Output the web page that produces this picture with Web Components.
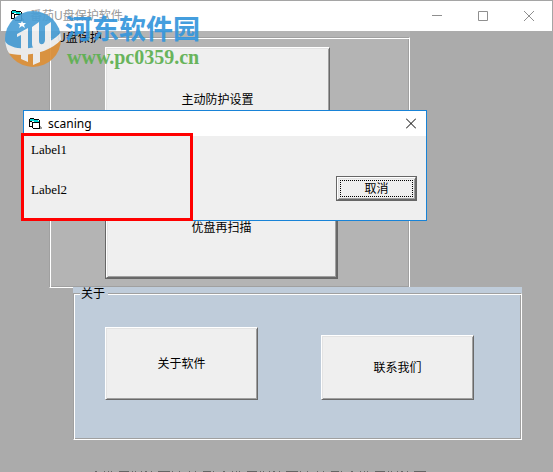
<!DOCTYPE html>
<html lang="zh-CN">
<head>
<meta charset="utf-8">
<title>番茄U盘保护软件</title>
<style>
  body {
    margin: 0;
    position: relative;
    min-height: 100vh;
    overflow: hidden;
    font: 12px/15px "Liberation Sans", "Noto Sans CJK SC", sans-serif;
    color: #000;
  }
  .usb {
    margin: 0 143px 0 49px;
    --frame-bg: #b4b4b4;
    --frame-padding: 3px 71px 8px 55px;
  }
  .about {
    margin: -1px 31px 0 73px;
    --frame-bg: #bfccda;
    --frame-padding: 27px 47px 39px 31px;
  }
  .stack {
    display: grid;
    gap: 24px;
  }
  .stack vb-button { height: 104px; }
  .stack .narrow { margin-right: 8px; }
  .pair {
    display: flex;
    justify-content: space-between;
    align-items: flex-end;
  }
  .pair vb-button { width: 153px; height: 73px; }
  .pair .short { height: 65px; }
  scan-dialog {
    position: absolute;
    left: 23px;
    top: 110px;
  }
  site-mark {
    position: absolute;
    left: 4px;
    top: 11px;
  }
</style>
</head>
<body>
  <app-window>
    <span slot="title">番茄U盘保护软件</span>
    <group-frame class="usb" label="U盘保护">
      <div class="stack">
        <vb-button class="narrow">主动防护设置</vb-button>
        <vb-button default>优盘再扫描</vb-button>
      </div>
    </group-frame>
    <group-frame class="about" label="关于">
      <div class="pair">
        <vb-button>关于软件</vb-button>
        <vb-button class="short">联系我们</vb-button>
      </div>
    </group-frame>
  </app-window>
  <site-mark></site-mark>
  <scan-dialog heading="scaning">
    <span>Label1</span>
    <span>Label2</span>
    <vb-button slot="action" default focused>取消</vb-button>
  </scan-dialog>

<script>
// Attach an open shadow root and fill it from a template
function stamp(host, html) {
  const template = document.createElement("template");
  template.innerHTML = html;
  host.attachShadow({ mode: "open" }).appendChild(template.content.cloneNode(true));
}

class FormIcon extends HTMLElement {
  constructor() {
    super();
    stamp(this, `
      <style>
        :host { display: block; flex: none; width: 13px; height: 12px; }
        svg { display: block; }
      </style>
      <svg width="13" height="12" viewBox="0 0 13 12" shape-rendering="crispEdges">
        <path d="M1 1h5v1h4v9H6v-1H1z" fill="#fff"/>
        <path d="M1 1h4v1h4v1h1v1H5V3H1z" fill="#00d8d8"/>
        <path d="M0 1h1v8H0zM1 0h4v1H1zM5 1h5v1H5zM10 2h1v9h-1zM1 3h2v1H1zM3 4h7v1H3zM3 4h1v6H3zM1 8h2v1H1zM4 10h6v1H4z" fill="#000"/>
        <path d="M11 8h1v1h1v2h-2z" fill="#999"/>
      </svg>
    `);
  }
}

class AppWindow extends HTMLElement {
  constructor() {
    super();
    stamp(this, `
      <style>
        :host {
          display: flex;
          flex-direction: column;
          box-sizing: border-box;
          min-height: 100vh;
          border-top: 1px solid #a5a5a5;
          background: #ababab;
        }
        header {
          display: flex;
          align-items: center;
          height: 30px;
          padding-left: 10px;
          background: #fff;
          border: solid #a5a5a5;
          border-width: 0 1px;
          box-sizing: border-box;
        }
        h1 {
          flex: 1;
          margin: 0 0 0 6px;
          font: 12px/16px "Noto Sans", "Noto Sans CJK SC", sans-serif;
          color: #999;
        }
        button {
          width: 46px;
          height: 30px;
          padding: 0;
          border: 0;
          background: none;
        }
        button svg { display: block; margin: auto; fill: none; stroke: #8f8f8f; }
        /* tops of the status line that runs off the window's lower edge */
        .status {
          display: block;
          width: 331px;
          height: 1px;
          margin: auto 0 0 95px;
          stroke: #666;
        }
      </style>
      <header>
        <form-icon></form-icon>
        <h1><slot name="title"></slot></h1>
        <button aria-label="最小化"><svg width="10" height="12"><path d="M0 5.500h10"/></svg></button>
        <button aria-label="最大化"><svg width="10" height="12"><path d="M.5 1.500h9v9h-9z"/></svg></button>
        <button aria-label="关闭"><svg width="10" height="12"><path d="M0 1l10 10M10 1L0 11"/></svg></button>
      </header>
      <slot></slot>
      <svg class="status" aria-hidden="true"><path d="M0 .5h331" stroke-dasharray="2 7 1 3 1 2 1 7 10 3 1 2 1 5 1 3 2 4 1 6 12 2 1 6 1 9 1 5 1 7 8 2 1 9"/></svg>
    `);
  }
}

class GroupFrame extends HTMLElement {
  constructor() {
    super();
    stamp(this, `
      <style>
        :host { display: block; position: relative; background: var(--frame-bg); }
        fieldset {
          margin: 0;
          min-width: 0;
          padding: 0;
          border: 1px solid;
          border-color: #a0a0a0 #fff #fff #a0a0a0;
          box-shadow: inset 1px 1px #fff, inset -1px -1px #a0a0a0;
        }
        legend {
          box-sizing: border-box;
          height: 13px;
          margin-left: 6px;
          padding: 0 3px 0 1px;
          background: var(--frame-bg);
        }
        .content { padding: var(--frame-padding); }
      </style>
      <fieldset>
        <legend></legend>
        <div class="content"><slot></slot></div>
      </fieldset>
    `);
    this.shadowRoot.querySelector("legend").textContent = this.getAttribute("label");
  }
}

class VbButton extends HTMLElement {
  constructor() {
    super();
    stamp(this, `
      <style>
        :host { display: block; box-sizing: border-box; }
        :host([default]) { border: 1px solid #666; }
        button {
          width: 100%;
          height: 100%;
          padding: 2px;
          font: inherit;
          color: inherit;
          background: #efefef;
          border: 1px solid;
          border-color: #fff #696969 #696969 #fff;
          box-shadow: inset 1px 1px #e3e3e3, inset -1px -1px #a0a0a0;
        }
        span {
          display: flex;
          align-items: center;
          justify-content: center;
          width: 100%;
          height: 100%;
          padding-top: 2px;
          box-sizing: border-box;
        }
        :host([focused]) span { border: 1px dotted #000; }
      </style>
      <button><span><slot></slot></span></button>
    `);
  }
}

class ScanDialog extends HTMLElement {
  constructor() {
    super();
    stamp(this, `
      <style>
        :host {
          display: block;
          box-sizing: border-box;
          width: 404px;
          border: 1px solid #1883d7;
          background: #efefef;
        }
        header {
          display: flex;
          align-items: center;
          height: 25px;
          padding-left: 5px;
          background: #fff;
        }
        h2 {
          flex: 1;
          margin: 0 0 0 6px;
          font: 12px/16px "Noto Sans", sans-serif;
        }
        header button {
          width: 30px;
          height: 25px;
          padding: 0;
          border: 0;
          background: none;
        }
        svg { display: block; margin: auto; fill: none; stroke: #000; }
        .body {
          display: flex;
          align-items: flex-end;
          justify-content: space-between;
          height: 84px;
          padding: 6px 9px 19px 7px;
          box-sizing: border-box;
        }
        .labels {
          display: grid;
          align-self: flex-start;
          gap: 24px;
          font: 13px/16px "Liberation Serif", serif;
        }
        ::slotted(vb-button) { width: 81px; height: 25px; }
        /* highlight drawn round the label area, over the dialog's edge */
        .highlight {
          position: absolute;
          left: -3px;
          top: 22px;
          width: 172px;
          height: 88px;
          box-sizing: border-box;
          border: 3px solid #f00;
        }
      </style>
      <header>
        <form-icon></form-icon>
        <h2></h2>
        <button aria-label="关闭"><svg width="10" height="11"><path d="M0 .5l10 10M10 .5l-10 10"/></svg></button>
      </header>
      <div class="body">
        <div class="labels"><slot></slot></div>
        <slot name="action"></slot>
      </div>
      <div class="highlight"></div>
    `);
    this.shadowRoot.querySelector("h2").textContent = this.getAttribute("heading");
  }
}

class SiteMark extends HTMLElement {
  constructor() {
    super();
    stamp(this, `
      <style>
        :host { display: flex; gap: 3px; pointer-events: none; opacity: .92; }
        .name {
          display: block;
          font: bold 27px/34px "Noto Sans CJK SC", sans-serif;
          color: #3596dc;
        }
        .url {
          display: block;
          margin-left: 2px;
          font: bold 20px/24px "Liberation Serif", serif;
          color: #5db050;
        }
      </style>
      <svg width="58" height="58" viewBox="0 0 58 58">
        <clipPath id="disc"><circle cx="29" cy="28" r="28"/></clipPath>
        <g clip-path="url(#disc)">
          <path d="M0 0h58v28C46 38 20 44 0 34z" fill="#4a9fd6"/>
          <path d="M0 40c18 6 44 0 58-16v34H0z" fill="#dd9038"/>
          <path d="M0 28c3 10 22 12 38 6 10-4 17-9 20-15v9C46 42 20 48 0 41z" fill="#f0f0f0"/>
          <path d="M13 23l11-6v22h-7V24l-4 2z" fill="#f2f2f2"/>
          <path d="M28 16l7-5v19c0 5 6 4 6-1V15l6-4v19c0 11-19 13-19 3z" fill="#f2f2f2"/>
          <path d="M17 38h7v13l-7-3zM29 38h7v13l-7 3z" fill="#f0f0f0"/>
          <path d="M18 10l1 2h3l-2 2 1 3-3-2-3 2 1-3-2-2h3z" fill="#fff"/>
        </g>
      </svg>
      <div>
        <span class="name">河东软件园</span>
        <span class="url">www.pc0359.cn</span>
      </div>
    `);
  }
}

customElements.define("form-icon", FormIcon);
customElements.define("app-window", AppWindow);
customElements.define("group-frame", GroupFrame);
customElements.define("vb-button", VbButton);
customElements.define("scan-dialog", ScanDialog);
customElements.define("site-mark", SiteMark);
</script>
</body>
</html>
